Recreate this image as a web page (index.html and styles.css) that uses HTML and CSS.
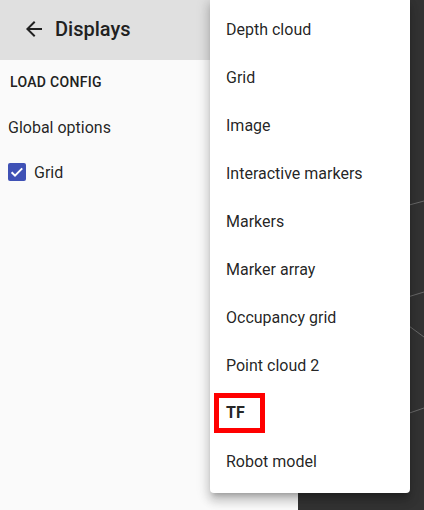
FILE: index.html
```html
<!DOCTYPE html>
<html>
<head>
<meta charset="utf-8">
<link rel="stylesheet" href="styles.css">
</head>
<body>
<div class="app">
  <aside class="drawer">
    <header class="drawer-header">
      <svg class="back" width="24" height="24" viewBox="0 0 24 24"><path d="M20 11H7.83l5.59-5.59L12 4l-8 8 8 8 1.41-1.41L7.83 13H20v-2z" fill="#212121"/></svg>
      <h1 class="title">Displays</h1>
    </header>
    <div class="drawer-body">
      <div class="load-btn">LOAD CONFIG</div>
      <div class="global">Global options</div>
      <label class="check-row">
        <span class="checkbox"><svg width="18" height="18" viewBox="0 0 18 18"><rect width="18" height="18" rx="2" fill="#3f51b5"/><path d="M3.6 9.2l3.4 3.4 7.2-7.2" stroke="#fff" stroke-width="2" fill="none"/></svg></span>
        <span class="check-label">Grid</span>
      </label>
    </div>
  </aside>
  <main class="canvas">
    <svg class="grid-lines" width="126" height="510" viewBox="0 0 126 510">
      <path d="M100 208L126 201M100 300L126 292M100 318L126 337M100 417L126 408" stroke="#6a6a6a" stroke-width="1" fill="none"/>
    </svg>
  </main>
  <ul class="menu">
    <li class="item">Depth cloud</li>
    <li class="item">Grid</li>
    <li class="item">Image</li>
    <li class="item">Interactive markers</li>
    <li class="item">Markers</li>
    <li class="item">Marker array</li>
    <li class="item">Occupancy grid</li>
    <li class="item">Point cloud 2</li>
    <li class="item"><span class="tf">TF</span></li>
    <li class="item">Robot model</li>
  </ul>
</div>
</body>
</html>
```

FILE: styles.css
```css
* { box-sizing: border-box; }
html, body { margin: 0; padding: 0; }
body {
  font-family: Roboto, "Liberation Sans", sans-serif;
  width: 424px;
  height: 510px;
  overflow: hidden;
}
.app {
  position: relative;
  display: flex;
  width: 424px;
  height: 510px;
}
.drawer {
  width: 298px;
  height: 510px;
  background: #fafafa;
  display: flex;
  flex-direction: column;
}
.drawer-header {
  height: 60px;
  background: #e0e0e0;
  display: flex;
  align-items: center;
  padding-left: 22px;
  padding-bottom: 2px;
}
.back { display: block; }
.title {
  margin: 0 0 0 9px;
  font-size: 20px;
  font-weight: 500;
  color: #212121;
  letter-spacing: 0;
}
.drawer-body {
  display: flex;
  flex-direction: column;
}
.load-btn {
  margin-top: 14px;
  padding-left: 10px;
  font-size: 14px;
  font-weight: 500;
  line-height: 16px;
  color: #212121;
  letter-spacing: 0.3px;
}
.global {
  margin-top: 28px;
  padding-left: 8px;
  font-size: 16px;
  line-height: 20px;
  color: rgba(0,0,0,0.87);
}
.check-row {
  margin-top: 24px;
  display: flex;
  align-items: center;
  padding-left: 8px;
  height: 20px;
}
.checkbox { display: block; width: 18px; height: 18px; }
.checkbox svg { display: block; }
.check-label {
  margin-left: 8px;
  font-size: 16px;
  color: rgba(0,0,0,0.87);
}
.canvas {
  flex: 1;
  height: 510px;
  background: #333333;
  position: relative;
}
.grid-lines { position: absolute; top: 0; left: 0; }
.menu {
  position: absolute;
  left: 210px;
  top: -3px;
  width: 200px;
  margin: 0;
  padding: 8px 0;
  list-style: none;
  background: #fff;
  border-radius: 4px;
  box-shadow: 0 5px 5px -3px rgba(0,0,0,0.2), 0 8px 10px 1px rgba(0,0,0,0.14), 0 3px 14px 2px rgba(0,0,0,0.12);
}
.item {
  height: 48px;
  display: flex;
  align-items: center;
  padding-left: 16px;
  font-size: 16px;
  color: rgba(0,0,0,0.87);
  white-space: nowrap;
}
.tf {
  font-weight: 700;
  margin-left: -12px;
  padding: 0 15px 0 7px;
  height: 40px;
  line-height: 30px;
  border: 5px solid #ff0000;
}
```
